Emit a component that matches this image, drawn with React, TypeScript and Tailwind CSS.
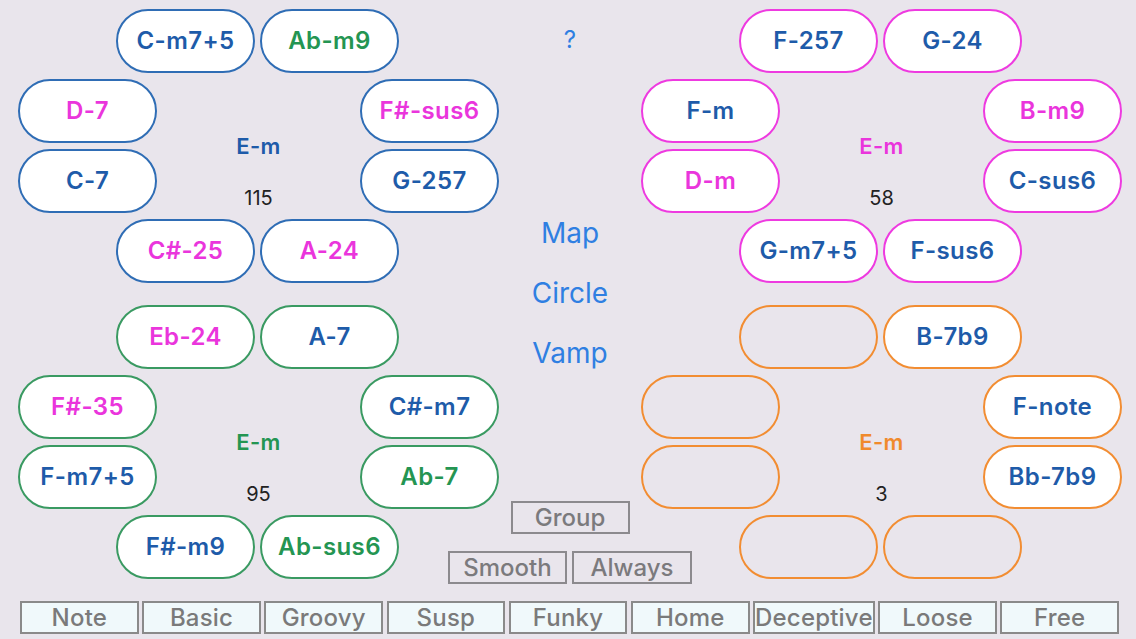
import React from 'react';

type Tone = 'blue' | 'magenta' | 'green' | 'orange';

const textColor: Record<Tone, string> = {
  blue: 'text-[#1e5ba9]',
  magenta: 'text-[#ea35dc]',
  green: 'text-[#249552]',
  orange: 'text-[#f08a2c]',
};

const borderColor: Record<Tone, string> = {
  blue: 'border-[#2f6db5]',
  magenta: 'border-[#ee3ae0]',
  green: 'border-[#3a9a62]',
  orange: 'border-[#f28d32]',
};

type Chord = { label: string; tone: Tone } | null;

interface ClusterProps {
  ring: Tone;
  rows: [Chord, Chord][];
  count: string;
}

const b = (label: string, tone: Tone): Chord => ({ label, tone });

function ChordButton({ chord, ring }: { chord: Chord; ring: Tone }) {
  return (
    <div
      className={`w-[139px] h-[64px] rounded-full border-2 flex items-center justify-center text-[24px] font-semibold tracking-[0.4px] ${borderColor[ring]} ${chord ? 'bg-white' : 'bg-transparent'}`}
    >
      {chord && <span className={textColor[chord.tone]}>{chord.label}</span>}
    </div>
  );
}

function Cluster({ ring, rows, count }: ClusterProps) {
  const [top, mid1, mid2, bottom] = rows;
  return (
    <div className="flex flex-col gap-[6px] w-[481px]">
      {/* fila de arriba */}
      <div className="flex gap-[5px] pl-[98px]">
        <ChordButton chord={top[0]} ring={ring} />
        <ChordButton chord={top[1]} ring={ring} />
      </div>

      {/* laterales + centro */}
      <div className="flex justify-between">
        <div className="flex flex-col gap-[6px]">
          <ChordButton chord={mid1[0]} ring={ring} />
          <ChordButton chord={mid2[0]} ring={ring} />
        </div>
        <div className="flex flex-col items-center pt-[55px]">
          <span className={`text-[22px] leading-[24px] font-semibold tracking-[0.3px] ${textColor[ring]}`}>E-m</span>
          <span className="mt-[29px] text-[20px] leading-[22px] text-[#222]">{count}</span>
        </div>
        <div className="flex flex-col gap-[6px]">
          <ChordButton chord={mid1[1]} ring={ring} />
          <ChordButton chord={mid2[1]} ring={ring} />
        </div>
      </div>

      {/* fila de abajo */}
      <div className="flex gap-[5px] pl-[98px]">
        <ChordButton chord={bottom[0]} ring={ring} />
        <ChordButton chord={bottom[1]} ring={ring} />
      </div>
    </div>
  );
}

const tabs = ['Note', 'Basic', 'Groovy', 'Susp', 'Funky', 'Home', 'Deceptive', 'Loose', 'Free'];

export default function App() {
  return (
    <div className="w-full h-[639px] bg-[#e9e5ec] overflow-hidden flex flex-col font-['Inter','Liberation_Sans',sans-serif]">
      <div className="flex h-[590px] pl-[18px]">
        {/* Izquierda */}
        <div className="flex flex-col gap-[22px] pt-[9px]">
          <Cluster
            ring="blue"
            count="115"
            rows={[
              [b('C-m7+5', 'blue'), b('Ab-m9', 'green')],
              [b('D-7', 'magenta'), b('F#-sus6', 'magenta')],
              [b('C-7', 'blue'), b('G-257', 'blue')],
              [b('C#-25', 'magenta'), b('A-24', 'magenta')],
            ]}
          />
          <Cluster
            ring="green"
            count="95"
            rows={[
              [b('Eb-24', 'magenta'), b('A-7', 'blue')],
              [b('F#-35', 'magenta'), b('C#-m7', 'blue')],
              [b('F-m7+5', 'blue'), b('Ab-7', 'green')],
              [b('F#-m9', 'blue'), b('Ab-sus6', 'green')],
            ]}
          />
        </div>

        {/* Centro */}
        <div className="w-[142px] flex flex-col items-center text-[#2f7fe2]">
          <div className="h-[80px] flex items-center text-[24px]">?</div>
          <div className="mt-[123px] h-[60px] flex items-center text-[28px]">Map</div>
          <div className="h-[60px] flex items-center text-[28px]">Circle</div>
          <div className="h-[60px] flex items-center text-[28px]">Vamp</div>
          <div className="mt-[118px] w-[119px] h-[33px] border-2 border-[#8c8a8e] flex items-center justify-center text-[24px] font-medium text-[#7b7a7d]">
            Group
          </div>
          <div className="mt-[17px] flex justify-center gap-[5px] w-[142px]">
            <div className="shrink-0 w-[119px] h-[33px] border-2 border-[#8c8a8e] flex items-center justify-center text-[24px] font-medium text-[#7b7a7d]">
              Smooth
            </div>
            <div className="shrink-0 w-[120px] h-[33px] border-2 border-[#8c8a8e] flex items-center justify-center text-[24px] font-medium text-[#7b7a7d]">
              Always
            </div>
          </div>
        </div>

        {/* Derecha */}
        <div className="flex flex-col gap-[22px] pt-[9px]">
          <Cluster
            ring="magenta"
            count="58"
            rows={[
              [b('F-257', 'blue'), b('G-24', 'blue')],
              [b('F-m', 'blue'), b('B-m9', 'magenta')],
              [b('D-m', 'magenta'), b('C-sus6', 'blue')],
              [b('G-m7+5', 'blue'), b('F-sus6', 'blue')],
            ]}
          />
          <Cluster
            ring="orange"
            count="3"
            rows={[
              [null, b('B-7b9', 'blue')],
              [null, b('F-note', 'blue')],
              [null, b('Bb-7b9', 'blue')],
              [null, null],
            ]}
          />
        </div>
      </div>

      {/* Pestañas */}
      <div className="mt-[11px] ml-[20px] w-[1099px] flex gap-[3.5px]">
        {tabs.map(t => (
          <div
            key={t}
            className="flex-1 h-[33px] bg-[#f0f9fb] border-2 border-[#8a8a8a] flex items-center justify-center text-[24px] font-medium text-[#7a7a7a] whitespace-nowrap tracking-[0.2px]"
          >
            {t}
          </div>
        ))}
      </div>
    </div>
  );
}
